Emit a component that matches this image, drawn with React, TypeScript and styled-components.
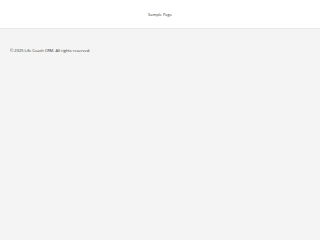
import React from 'react';
import styled, { createGlobalStyle } from 'styled-components';

const GlobalStyle = createGlobalStyle`
  html, body {
    margin: 0;
    padding: 0;
    background: #f4f4f4;
    font-family: "Open Sans", "Noto Sans", sans-serif;
  }
`;

const Page = styled.div`
  display: flex;
  flex-direction: column;
  min-height: 240px;
  background: #f4f4f4;
`;

const Header = styled.header`
  display: flex;
  align-items: center;
  justify-content: center;
  height: 28px;
  background: #ffffff;
  border-bottom: 1px solid #e9e9e9;
`;

const HeaderTitle = styled.div`
  font-size: 4px;
  color: #333333;
`;

const Footer = styled.footer`
  padding: 19px 10px;
`;

const FooterText = styled.div`
  font-size: 4px;
  color: #333333;
`;

export default function App() {
  return (
    <Page>
      <GlobalStyle />
      <Header>
        <HeaderTitle>Sample Page</HeaderTitle>
      </Header>
      <Footer>
        <FooterText>© 2025 Life Coach CRM. All rights reserved.</FooterText>
      </Footer>
    </Page>
  );
}
